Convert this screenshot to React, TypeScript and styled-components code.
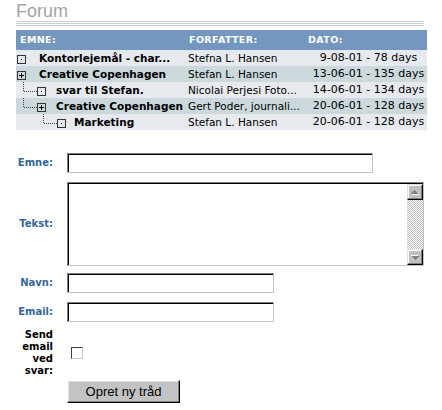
import React from "react";
import styled, { createGlobalStyle } from "styled-components";

const Global = createGlobalStyle`
  html, body { margin: 0; padding: 0; background: #fff; }
  body { font-family: "DejaVu Sans", Verdana, sans-serif; }
`;

const COLS = "169px 119px 123px";

const Page = styled.div`
  width: 442px;
  height: 410px;
  overflow: hidden;
  box-sizing: border-box;
  padding: 3px 0 0 16px;
  display: flex;
  flex-direction: column;
`;

const Title = styled.h1`
  margin: 0;
  height: 18px;
  font: 400 18px/16px "Liberation Sans", Arial, sans-serif;
  color: #a3a3a3;
`;

const Rule = styled.div`
  width: 408px;
  height: 5px;
  background: repeating-linear-gradient(to bottom, #cfcfcf 0 1px, transparent 1px 2px);
`;

const Table = styled.div`
  width: 411px;
  margin-top: 4px;
  display: flex;
  flex-direction: column;
`;

const HeadRow = styled.div`
  display: grid;
  grid-template-columns: ${COLS};
  height: 20px;
  align-items: center;
  background: #7397bf;
  color: #fff;
  font: bold 9.5px/20px "DejaVu Sans", Verdana, sans-serif;
  letter-spacing: 0.4px;
`;

const HeadCell = styled.div`
  padding-left: 4px;
`;

const Row = styled.div<{ $alt: boolean }>`
  display: grid;
  grid-template-columns: ${COLS};
  height: 16px;
  align-items: center;
  background: ${(p) => (p.$alt ? "#cbd8dc" : "#e6e9ee")};
  color: #000;
  font: 10.5px/16px "DejaVu Sans", Verdana, sans-serif;
  white-space: nowrap;
`;

const SubjectCell = styled.div`
  display: flex;
  align-items: center;
  height: 16px;
  font-weight: bold;
`;

const AuthorCell = styled.div`
  padding-left: 3px;
`;

const DateCell = styled.div`
  padding-left: 6px;
  text-align: center;
  font-size: 11px;
  overflow: hidden;
`;

const Gutter = styled.svg`
  flex: none;
  display: block;
`;

const TreeIcon = ({ level, plus }: { level: number; plus: boolean }) => {
  const bx = 1 + level * 20;
  const width = level === 0 ? 23 : 22 + level * 18;
  const vx = bx - 14;
  return (
    <Gutter width={width} height={16} viewBox={`0 0 ${width} 16`} shapeRendering="crispEdges">
      {level > 0 && (
        <>
          <line x1={vx + 0.5} y1={0} x2={vx + 0.5} y2={10} stroke="#444" strokeDasharray="1 1" />
          <line x1={vx + 1} y1={9.5} x2={bx} y2={9.5} stroke="#444" strokeDasharray="1 1" />
        </>
      )}
      <rect x={bx + 0.5} y={5.5} width={8} height={8} fill="none" stroke="#333" />
      {plus ? (
        <>
          <line x1={bx + 2} y1={9.5} x2={bx + 7} y2={9.5} stroke="#000" />
          <line x1={bx + 4.5} y1={7} x2={bx + 4.5} y2={12} stroke="#000" />
        </>
      ) : (
        <rect x={bx + 4} y={9} width={1} height={1} fill="#000" />
      )}
    </Gutter>
  );
};

const Form = styled.form`
  margin: 23px 0 0;
  display: flex;
  flex-direction: column;
`;

const Field = styled.div<{ $top: number }>`
  display: grid;
  grid-template-columns: 37px auto;
  column-gap: 14px;
  align-items: center;
  justify-content: start;
  margin-top: ${(p) => p.$top}px;
`;

const Label = styled.label<{ $plain?: boolean }>`
  text-align: right;
  font: bold 10px/12px "DejaVu Sans", Verdana, sans-serif;
  color: ${(p) => (p.$plain ? "#000" : "#336699")};
`;

const TextInput = styled.input<{ $w: number }>`
  box-sizing: border-box;
  width: ${(p) => p.$w}px;
  height: 20px;
  margin: 0;
  padding: 1px 3px;
  border: 1px solid;
  border-color: #808080 #c4c4c4 #c4c4c4 #808080;
  box-shadow: inset 1px 1px 0 #000;
  background: #fff;
  outline: none;
  font: 12px "Liberation Sans", Arial, sans-serif;
`;

const AreaFrame = styled.div`
  box-sizing: border-box;
  width: 357px;
  height: 84px;
  display: flex;
  border: 1px solid;
  border-color: #808080 #c4c4c4 #c4c4c4 #808080;
  box-shadow: inset 1px 1px 0 #000;
  padding: 1px 0 0 1px;
  background: #fff;
`;

const Area = styled.textarea`
  flex: 1;
  border: 0;
  margin: 0;
  padding: 2px;
  resize: none;
  outline: none;
  background: transparent;
  font: 12px "Liberation Sans", Arial, sans-serif;
`;

const ScrollBar = styled.div`
  width: 16px;
  display: flex;
  flex-direction: column;
`;

const ScrollButton = styled.div`
  box-sizing: border-box;
  width: 16px;
  height: 16px;
  flex: none;
  display: flex;
  align-items: center;
  justify-content: center;
  background: #c0c0c0;
  border: 1px solid;
  border-color: #dfdfdf #000 #000 #dfdfdf;
  box-shadow: inset -1px -1px 0 #808080, inset 1px 1px 0 #fff;
`;

const Track = styled.div`
  flex: 1;
  background: repeating-conic-gradient(#c0c0c0 0 25%, #fff 0 50%) 0 0 / 2px 2px;
`;

const Arrow = ({ down }: { down?: boolean }) => (
  <svg width="8" height="5" viewBox="0 0 8 5" shapeRendering="crispEdges">
    <g transform={down ? "rotate(180 4 2.5)" : undefined}>
      <path d="M1 4h7v1H1z" fill="#fff" />
      <path d="M3 0h1v1H3zM2 1h3v1H2zM1 2h5v1H1zM0 3h7v1H0z" fill="#808080" />
    </g>
  </svg>
);

const Check = styled.input`
  appearance: none;
  box-sizing: border-box;
  width: 12px;
  height: 12px;
  margin: 0 0 0 4px;
  border: 1px solid;
  border-color: #404040 #c8c8c8 #c8c8c8 #404040;
  background: #fff;
`;

const Button = styled.button`
  box-sizing: border-box;
  width: 113px;
  height: 23px;
  margin: 0;
  padding: 0;
  background: #c3c3c3;
  border: 1px solid;
  border-color: #fff #000 #000 #fff;
  box-shadow: inset -1px -1px 0 #808080, inset 1px 1px 0 #e0e0e0;
  font: 13px "Liberation Sans", Arial, sans-serif;
  color: #000;
`;

const rows = [
  { level: 0, plus: false, subject: "Kontorlejemål - char...", author: "Stefna L. Hansen", date: "9-08-01 - 78 days" },
  { level: 0, plus: true, subject: "Creative Copenhagen", author: "Stefan L. Hansen", date: "13-06-01 - 135 days" },
  { level: 1, plus: false, subject: "svar til Stefan.", author: "Nicolai Perjesi Foto...", date: "14-06-01 - 134 days" },
  { level: 1, plus: true, subject: "Creative Copenhagen", author: "Gert Poder, journali...", date: "20-06-01 - 128 days" },
  { level: 2, plus: false, subject: "Marketing", author: "Stefan L. Hansen", date: "20-06-01 - 128 days" },
];

export default function App() {
  return (
    <>
      <Global />
      <Page>
        <Title>Forum</Title>
        <Rule />
        <Table>
          <HeadRow>
            <HeadCell>EMNE:</HeadCell>
            <HeadCell>FORFATTER:</HeadCell>
            <HeadCell>DATO:</HeadCell>
          </HeadRow>
          {rows.map((r, i) => (
            <Row key={i} $alt={i % 2 === 1}>
              <SubjectCell>
                <TreeIcon level={r.level} plus={r.plus} />
                {r.subject}
              </SubjectCell>
              <AuthorCell>{r.author}</AuthorCell>
              <DateCell>{r.date}</DateCell>
            </Row>
          ))}
        </Table>
        <Form onSubmit={(e) => e.preventDefault()}>
          <Field $top={0}>
            <Label>Emne:</Label>
            <TextInput type="text" $w={306} />
          </Field>
          <Field $top={9}>
            <Label>Tekst:</Label>
            <AreaFrame>
              <Area />
              <ScrollBar>
                <ScrollButton><Arrow /></ScrollButton>
                <Track />
                <ScrollButton><Arrow down /></ScrollButton>
              </ScrollBar>
            </AreaFrame>
          </Field>
          <Field $top={7}>
            <Label>Navn:</Label>
            <TextInput type="text" $w={207} />
          </Field>
          <Field $top={9}>
            <Label>Email:</Label>
            <TextInput type="text" $w={207} />
          </Field>
          <Field $top={7}>
            <Label $plain>Send email ved svar:</Label>
            <Check type="checkbox" />
          </Field>
          <Field $top={3}>
            <span />
            <Button type="submit">Opret ny tråd</Button>
          </Field>
        </Form>
      </Page>
    </>
  );
}
